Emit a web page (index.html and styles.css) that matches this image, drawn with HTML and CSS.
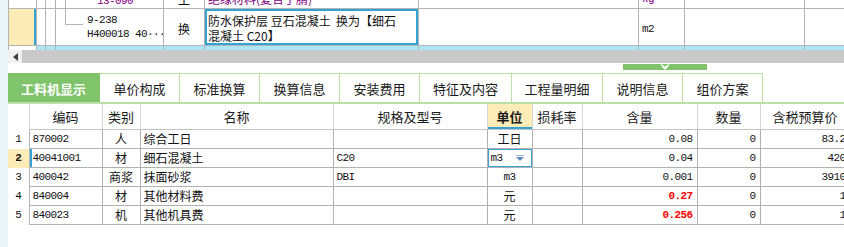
FILE: index.html
```html
<!DOCTYPE html>
<html>
<head>
    <meta charset="utf-8">
    <title>工料机显示</title>
    <link rel="stylesheet" href="styles.css">
</head>
<body>
<div class="app">
    <div class="side"></div>
    <div class="main">

        <!-- upper tree grid, scrolled so the first row is cut -->
        <div class="tree-view">
            <table class="tree">
                <colgroup>
                    <col class="t-flag"><col class="t-a"><col class="t-b"><col class="t-code">
                    <col class="t-type"><col class="t-name"><col class="t-spec"><col class="t-unit">
                    <col class="t-qty"><col class="t-rest">
                </colgroup>
                <tr class="r-cut">
                    <td></td><td></td><td></td>
                    <td class="node"><div class="node-in"><span class="branch full"></span><span class="mono purple pad-top">13-090</span></div></td>
                    <td class="center">主</td>
                    <td class="purple">绝缘材料(复合了腈)</td>
                    <td></td>
                    <td class="mono purple">kg</td>
                    <td></td><td></td>
                </tr>
                <tr class="r-cur">
                    <td class="flag"></td><td></td><td></td>
                    <td class="node"><div class="node-in"><span class="branch half"></span><span class="mono code2">9-238<br>H400018 40···</span></div></td>
                    <td class="center low">换</td>
                    <td class="desc">防水保护层 豆石混凝土&nbsp;&nbsp;换为【细石<br>混凝土 C20】</td>
                    <td></td>
                    <td class="mono low">m2</td>
                    <td></td><td></td>
                </tr>
                <tr class="r-next">
                    <td class="plain"></td><td></td><td></td><td></td><td></td><td></td>
                    <td>1.2 包设 水喷淋保管</td>
                    <td></td><td></td><td></td>
                </tr>
            </table>
        </div>

        <div class="hscroll">
            <span class="hs-btn"><svg width="5" height="8" viewBox="0 0 5 8"><polygon points="5,0 0,4 5,8" fill="#404040"/></svg></span>
            <div class="hs-thumb"></div>
        </div>

        <div class="splitter">
            <span class="grip"><svg width="10" height="6" viewBox="0 0 10 6"><polyline points="1,0.5 5,3.5 9,0.5" fill="none" stroke="#fff" stroke-width="1.2"/><polyline points="2,2.5 5,5 8,2.5" fill="none" stroke="#fff" stroke-width="1.2"/></svg></span>
        </div>

        <div class="tabs">
            <div class="tab on wide">工料机显示</div>
            <div class="tab">单价构成</div>
            <div class="tab">标准换算</div>
            <div class="tab">换算信息</div>
            <div class="tab">安装费用</div>
            <div class="tab wide">特征及内容</div>
            <div class="tab wide1">工程量明细</div>
            <div class="tab">说明信息</div>
            <div class="tab">组价方案</div>
        </div>

        <div class="grid-view">
            <table class="grid">
                <colgroup>
                    <col class="g-idx"><col class="g-code"><col class="g-type"><col class="g-name">
                    <col class="g-spec"><col class="g-unit"><col class="g-loss"><col class="g-qty">
                    <col class="g-amt"><col class="g-price">
                </colgroup>
                <tr>
                    <th class="idx"></th>
                    <th>编码</th>
                    <th>类别</th>
                    <th>名称</th>
                    <th>规格及型号</th>
                    <th class="sel">单位</th>
                    <th>损耗率</th>
                    <th>含量</th>
                    <th>数量</th>
                    <th>含税预算价</th>
                </tr>
                <tr>
                    <td class="idx mono">1</td>
                    <td class="mono">870002</td>
                    <td class="center">人</td>
                    <td>综合工日</td>
                    <td></td>
                    <td class="center">工日</td>
                    <td></td>
                    <td class="num mono">0.08</td>
                    <td class="num mono">0</td>
                    <td class="num mono">83.2</td>
                </tr>
                <tr class="current">
                    <td class="idx mono">2</td>
                    <td class="mono lead">40041001</td>
                    <td class="center">材</td>
                    <td>细石混凝土</td>
                    <td class="mono">C20</td>
                    <td class="edit"><div class="combo"><span class="mono">m3</span><svg width="8" height="6" viewBox="0 0 8 6"><rect x="0" y="0" width="8" height="1" fill="#8fb3da"/><polygon points="0,2 8,2 4,6" fill="#5b8bc4"/></svg></div></td>
                    <td></td>
                    <td class="num mono">0.04</td>
                    <td class="num mono">0</td>
                    <td class="num mono">420</td>
                </tr>
                <tr>
                    <td class="idx mono">3</td>
                    <td class="mono">400042</td>
                    <td class="center">商浆</td>
                    <td>抹面砂浆</td>
                    <td class="mono">DBI</td>
                    <td class="center mono">m3</td>
                    <td></td>
                    <td class="num mono">0.001</td>
                    <td class="num mono">0</td>
                    <td class="num mono">3910</td>
                </tr>
                <tr>
                    <td class="idx mono">4</td>
                    <td class="mono">840004</td>
                    <td class="center">材</td>
                    <td>其他材料费</td>
                    <td></td>
                    <td class="center">元</td>
                    <td></td>
                    <td class="num mono red">0.27</td>
                    <td class="num mono">0</td>
                    <td class="num mono">1</td>
                </tr>
                <tr>
                    <td class="idx mono">5</td>
                    <td class="mono">840023</td>
                    <td class="center">机</td>
                    <td>其他机具费</td>
                    <td></td>
                    <td class="center">元</td>
                    <td></td>
                    <td class="num mono red">0.256</td>
                    <td class="num mono">0</td>
                    <td class="num mono">1</td>
                </tr>
            </table>
        </div>
    </div>
</div>
</body>
</html>
```

FILE: styles.css
```css
html, body {
    margin: 0;
    height: 100%;
}

body {
    font-family: "Noto Sans CJK SC", sans-serif;
    font-size: 12px;
    color: #111;
    background: #fff;
    overflow: hidden;
}

.app {
    display: flex;
    height: 247px;
}

.side {
    flex: none;
    width: 8px;
    background: #e8f5fb;
}

.main {
    flex: 1;
    min-width: 0;
    overflow: hidden;
    display: flex;
    flex-direction: column;
}

.mono {
    font-family: "Liberation Mono", monospace;
    font-size: 11px;
    letter-spacing: -0.6px;
}

.center { text-align: center; }
.purple { color: #800080; }

/* upper tree grid */
.tree-view {
    flex: none;
    height: 50px;
    overflow: hidden;
}

.tree {
    table-layout: fixed;
    border-collapse: collapse;
    width: 856px;
    margin-top: -12px;
}

.t-flag { width: 28px; }
.t-a { width: 9px; }
.t-b { width: 10px; }
.t-code { width: 108px; }
.t-type { width: 41px; }
.t-name { width: 214px; }
.t-spec { width: 220px; }
.t-unit { width: 46px; }
.t-qty { width: 120px; }
.t-rest { width: 60px; }

.tree td {
    border: 1px solid #b4b4b4;
    padding: 0 3px;
    line-height: 16px;
    white-space: nowrap;
    overflow: hidden;
    vertical-align: middle;
}

.tree td.low { padding-top: 4px; }

.tree .r-cut td { height: 19px; }
.tree .r-cur td { height: 32px; }
.tree .r-next td { height: 19px; background: #ade6f7; vertical-align: top; padding-top: 2px; }
.tree .r-next td.plain { background: #fff; }

.tree td.flag {
    background: #fdebb6;
    box-shadow: inset -2px 0 0 #34a2d2;
}

.tree td.node {
    padding: 0;
    vertical-align: top;
}

.node-in {
    display: flex;
    height: 100%;
}

.r-cut .node-in { height: 19px; }
.r-cur .node-in { height: 32px; }

.branch {
    flex: none;
    width: 17px;
    margin-left: 9px;
    border-left: 1px solid #b4b4b4;
}

.branch.half {
    height: 15px;
    border-bottom: 1px solid #b4b4b4;
}

.pad-top {
    padding-left: 14px;
    padding-top: 4px;
}

.code2 {
    padding-left: 4px;
    padding-top: 4px;
    line-height: 14px;
}

.tree td.desc {
    box-shadow: inset 0 0 0 2px #34a2d2;
    line-height: 15px;
    padding: 1px 3px 0;
    white-space: normal;
}

/* scrollbar and splitter */
.hscroll {
    flex: none;
    display: flex;
    height: 13px;
    background: #c9c9c9;
}

.hs-btn {
    width: 14px;
    background: #f1f1f1;
    display: flex;
    align-items: center;
    justify-content: center;
}

.hs-thumb {
    flex: 1;
    background: #c9c9c9;
}

.splitter {
    flex: none;
    height: 10px;
}

.grip {
    display: flex;
    justify-content: center;
    width: 84px;
    height: 6px;
    margin: 1px 0 0 615px;
    background: #80c36a;
}

/* tab strip */
.tabs {
    flex: none;
    display: flex;
    height: 29px;
    border-bottom: 2px solid #b9e0a6;
}

.tab {
    box-sizing: border-box;
    width: 80px;
    border-top: 1px solid #b9e0a6;
    border-right: 1px solid #b9e0a6;
    display: flex;
    align-items: center;
    justify-content: center;
    font-size: 13px;
    color: #1a1a1a;
}

.tab.wide { width: 92px; }
.tab.wide1 { width: 91px; }

.tab.on {
    background: #7fc36a;
    border-color: #7fc36a;
    color: #fff;
    font-weight: bold;
}

/* lower grid */
.grid-view {
    overflow: hidden;
}

.grid {
    table-layout: fixed;
    border-collapse: collapse;
    width: 842px;
}

.g-idx { width: 21px; }
.g-code { width: 73px; }
.g-type { width: 38px; }
.g-name { width: 193px; }
.g-spec { width: 154px; }
.g-unit { width: 45px; }
.g-loss { width: 50px; }
.g-qty { width: 115px; }
.g-amt { width: 63px; }
.g-price { width: 90px; }

.grid th {
    height: 25px;
    padding: 0;
    font-size: 13px;
    font-weight: normal;
    color: #1a1a1a;
    border-right: 1px solid #d6d6d6;
    border-bottom: 1px solid #c4c4c4;
}

.grid th.idx { border-bottom: none; }

.grid th.sel {
    background: #feecb8;
    font-weight: bold;
    box-shadow: inset 0 -2px 0 #34a2d2;
}

.grid td {
    height: 18px;
    padding: 0 3px;
    line-height: 16px;
    border: 1px solid #b2b2b2;
    white-space: nowrap;
    overflow: hidden;
}

.grid td.idx {
    border-top: none;
    border-bottom: none;
    border-left: none;
    text-align: center;
    padding: 0;
}

.current td.idx {
    background: #feecb8;
    font-weight: bold;
}

.grid td.lead { box-shadow: inset 2px 0 0 #34a2d2; }

.grid td.num {
    text-align: right;
    padding-right: 4px;
}

.grid td.red {
    color: #ff0000;
    font-weight: bold;
}

.grid td.edit {
    padding: 0;
    box-shadow: inset 0 0 0 1px #34a2d2;
}

.combo {
    display: flex;
    align-items: center;
    gap: 13px;
    padding-left: 3px;
}
```
